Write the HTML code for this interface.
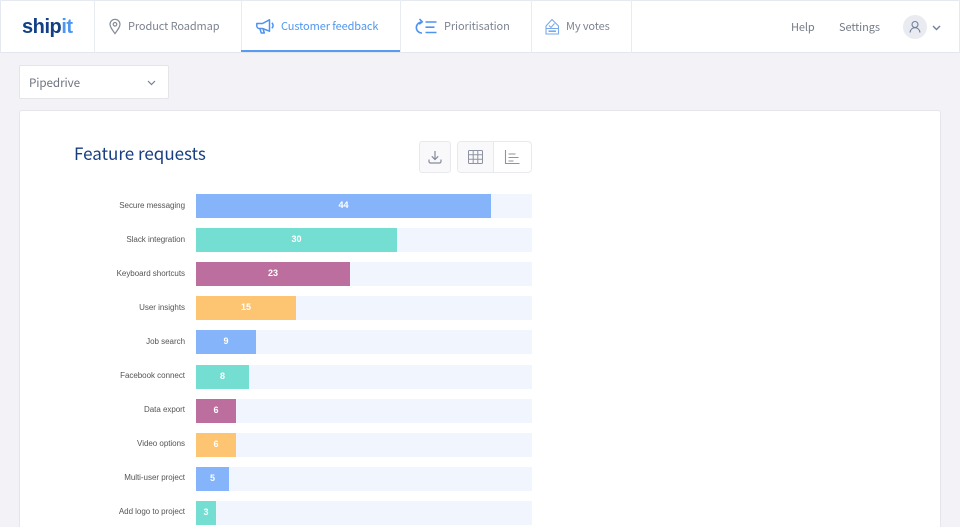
<!DOCTYPE html>
<html><head><meta charset="utf-8"><style>
*{box-sizing:border-box;margin:0;padding:0}
html,body{width:960px;height:527px;overflow:hidden;background:#f2f2f7;font-family:"Noto Sans CJK JP","Liberation Sans",sans-serif}
#page{position:relative;width:960px;height:527px;overflow:hidden;background:#f2f2f7}
.a{position:absolute}
#nav{left:0;top:0;width:960px;height:53px;background:#fff;border:1px solid #e6e9ef;border-bottom:1px solid #e4e6ee}
.sep{position:absolute;top:0;width:1px;height:53px;background:#e8ebf0}
.t{position:absolute;font-size:11px;letter-spacing:-.1px;line-height:16px;color:#7d8490;white-space:nowrap}
.lab{position:absolute;right:775px;font:8px/12px "Liberation Sans",sans-serif;color:#555;white-space:nowrap;letter-spacing:-.03px}
.track{position:absolute;left:196px;width:336px;height:24px;background:#f1f5fd}
.bar{position:absolute;left:0;top:0;height:24px;color:#fff;font:bold 9px/23px "Liberation Sans",sans-serif;text-align:center}
svg{position:absolute;overflow:visible}
</style></head><body><div id="page">
<div class="a" id="nav"></div>
<div class="sep" style="left:94px"></div><div class="sep" style="left:241px"></div><div class="sep" style="left:400px"></div><div class="sep" style="left:531px"></div><div class="sep" style="left:631px"></div>
<div class="a" style="left:241px;top:50px;width:159px;height:2px;background:#5a9bf2"></div>

<div class="a" style="left:22px;top:14px;font:bold 20px/26px 'Liberation Sans',sans-serif;letter-spacing:-.45px;color:#123f85">ship<span style="color:#4d97f0">it</span></div>

<svg style="left:108px;top:18px" width="14" height="17" fill="none" stroke="#858c98" stroke-width="1.2"><path d="M7 15.600C3.500 11 2 8.700 2 6.300a5 5 0 0 1 10 0C12 8.700 10.500 11 7 15.600z"/><circle cx="7" cy="6.300" r="1.800"/></svg>
<div class="t" style="left:128px;top:18px">Product Roadmap</div>

<svg style="left:256px;top:19px" width="19" height="16" fill="none" stroke="#4d93ef" stroke-width="1.500" stroke-linejoin="round"><path d="M.8 4.500h5.700L13.500.8v11.400L6.500 9.500H3.300A2.500 2.500 0 0 1 .8 7z"/><path d="M3.800 9.500l1.500 4.500h3l-1.200-4M15.800 3.800a3.500 3.500 0 0 1 0 5.400"/></svg>
<div class="t" style="left:281px;top:18px;color:#4f97f1">Customer feedback</div>

<svg style="left:415px;top:18px" width="23" height="17" fill="none" stroke="#4d93ef" stroke-width="1.600"><path d="M6.500 4.200A5.200 5.200 0 0 0 7 15"/><path d="M4.500 1L7.200 3.800 4.200 6.200"/><path d="M10.500 4h11M10.500 9.200h9M10.500 14.500h11"/></svg>
<div class="t" style="left:444px;top:18px">Prioritisation</div>

<svg style="left:545px;top:18px" width="15" height="17" fill="none" stroke="#79a9ea" stroke-width="1.100"><path d="M1 8L7 1.500l6.500 6.500v8H1z"/><path d="M4 7.500L6 9.500l3.500-4M1 10.500h12.500"/><path d="M3.500 13.200h7.500" stroke-width="1.600"/></svg>
<div class="t" style="left:566px;top:18px">My votes</div>

<div class="t" style="left:791px;top:19px;color:#757b86">Help</div>
<div class="t" style="left:839px;top:19px;color:#757b86">Settings</div>
<div class="a" style="left:903px;top:15px;width:24px;height:24px;border-radius:50%;background:#e9ebf0"></div>
<svg style="left:908px;top:20px" width="14" height="14" fill="none" stroke="#6f7f9c" stroke-width="1.100"><circle cx="7" cy="4.500" r="3"/><path d="M2 12.500c.4-3 2.400-4.800 5-4.800s4.600 1.800 5 4.800"/></svg>
<svg style="left:932px;top:25px" width="9" height="6" fill="none" stroke="#6f7f9c" stroke-width="1.400"><path d="M1 1l3.500 3.500L8 1"/></svg>

<div class="a" style="left:19px;top:65px;width:150px;height:34px;background:#fff;border:1px solid #e3e5eb;border-radius:2px"></div>
<div class="t" style="left:29px;top:75px;font-size:11.700px;color:#6f7580">Pipedrive</div>
<svg style="left:147px;top:80px" width="9" height="6" fill="none" stroke="#77808c" stroke-width="1.200"><path d="M1 1l3.500 3.500L8 1"/></svg>

<div class="a" style="left:19px;top:110px;width:922px;height:430px;background:#fff;border:1px solid #e4e6ec;border-radius:3px"></div>
<div class="a" style="left:74px;top:140px;font-size:17px;line-height:26px;color:#173f80;white-space:nowrap">Feature requests</div>

<div class="a" style="left:419px;top:141px;width:32px;height:32px;background:#f9f9fb;border:1px solid #e8e9ee;border-radius:3px"></div>
<div class="a" style="left:457px;top:141px;width:75px;height:32px;background:#fff;border:1px solid #e8e9ee;border-radius:4px"></div>
<div class="a" style="left:458px;top:142px;width:36px;height:30px;background:#f9f9fb;border-right:1px solid #e8e9ee;border-radius:3px 0 0 3px"></div>
<svg style="left:428px;top:150px" width="14" height="14" fill="none" stroke="#858b98" stroke-width="1.200"><path d="M7 1v8M3.800 6.300L7 9.500l3.200-3.200M1 9.500v2a1.500 1.500 0 0 0 1.500 1.500h9a1.500 1.500 0 0 0 1.500-1.500v-2"/></svg>
<svg style="left:468px;top:150px" width="15" height="14" fill="none" stroke="#8d93a0" stroke-width="1"><rect x=".5" y=".5" width="14" height="13" rx="1"/><path d="M5.200 .5v13M9.800 .5v13M.5 4.800h14M.5 9.200h14"/></svg>
<svg style="left:505px;top:150px" width="15" height="14" fill="none" stroke="#8d93a0" stroke-width="1.100"><path d="M.5 0v13.500h14M3.500 4h7M3.500 7.500h10M3.500 11h5"/></svg>

<div class="lab" style="top:200px">Secure messaging</div>
<div class="track" style="top:194px"><div class="bar" style="width:295px;background:#85b4fb">44</div></div>
<div class="lab" style="top:234px">Slack integration</div>
<div class="track" style="top:228px"><div class="bar" style="width:201px;background:#75ded3">30</div></div>
<div class="lab" style="top:268px">Keyboard shortcuts</div>
<div class="track" style="top:262px"><div class="bar" style="width:154px;background:#bc6f9e">23</div></div>
<div class="lab" style="top:302px">User insights</div>
<div class="track" style="top:296px"><div class="bar" style="width:100px;background:#fdc472">15</div></div>
<div class="lab" style="top:336px">Job search</div>
<div class="track" style="top:330px"><div class="bar" style="width:60px;background:#85b4fb">9</div></div>
<div class="lab" style="top:370px">Facebook connect</div>
<div class="track" style="top:364.500px"><div class="bar" style="width:53px;background:#75ded3">8</div></div>
<div class="lab" style="top:404px">Data export</div>
<div class="track" style="top:398.500px"><div class="bar" style="width:40px;background:#bc6f9e">6</div></div>
<div class="lab" style="top:438px">Video options</div>
<div class="track" style="top:432.500px"><div class="bar" style="width:40px;background:#fdc472">6</div></div>
<div class="lab" style="top:472px">Multi-user project</div>
<div class="track" style="top:466.500px"><div class="bar" style="width:33px;background:#85b4fb">5</div></div>
<div class="lab" style="top:506px">Add logo to project</div>
<div class="track" style="top:500.500px"><div class="bar" style="width:20px;background:#75ded3">3</div></div>
</div></body></html>
